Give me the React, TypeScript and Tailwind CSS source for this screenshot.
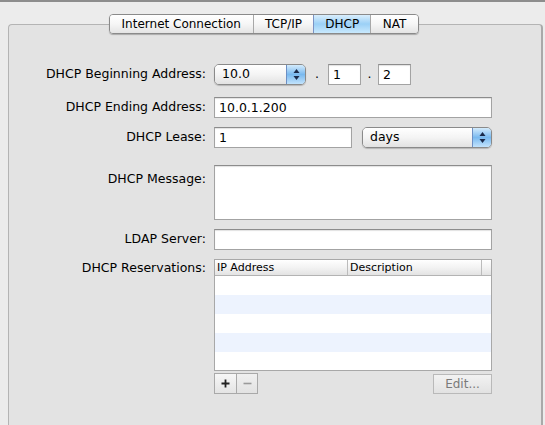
import React from "react";

const font = { fontFamily: '"DejaVu Sans", "Liberation Sans", sans-serif' };

function Arrows() {
  return (
    <svg width="7" height="13" viewBox="0 0 7 13">
      <path d="M3.5 1 L6.5 5 L0.5 5 Z" fill="#1b2a4a" />
      <path d="M3.5 12 L6.5 8 L0.5 8 Z" fill="#1b2a4a" />
    </svg>
  );
}

function Popup({ w, text }: { w: string; text: string }) {
  return (
    <div
      className={`${w} flex h-[21px] shrink-0 overflow-hidden rounded-[5px] border border-[#8a8a8a] shadow-[0_1px_1px_rgba(0,0,0,0.2)]`}
    >
      <div className="flex flex-1 items-center bg-gradient-to-b from-white via-[#f4f4f4] to-[#e2e2e2] pl-[7px] text-[12.5px] text-black">
        {text}
      </div>
      <div className="flex w-[19px] items-center justify-center border-l border-[#6c8fc4] bg-gradient-to-b from-[#d3ebfc] via-[#79b9ef] to-[#c2e3fc]">
        <Arrows />
      </div>
    </div>
  );
}

function Field({ w, text, h = "h-[21px]" }: { w: string; text?: string; h?: string }) {
  return (
    <div
      className={`${w} ${h} flex shrink-0 items-start border border-[#a3a3a3] border-t-[#8c8c8c] bg-white pl-[4px] pt-[2px] text-[12.5px] leading-[15px] text-black shadow-[inset_0_1px_1px_rgba(0,0,0,0.12)]`}
    >
      {text}
    </div>
  );
}

function Label({ children, top = false }: { children: React.ReactNode; top?: boolean }) {
  return (
    <div
      className={`w-[198px] shrink-0 pr-[1px] text-right text-[12.5px] text-black ${top ? "pt-[5px]" : "self-center"}`}
    >
      {children}
    </div>
  );
}

export default function App() {
  const tabs = [
    { t: "Internet Connection", w: "w-[143px]" },
    { t: "TCP/IP", w: "w-[61px]" },
    { t: "DHCP", w: "w-[57px]", sel: true },
    { t: "NAT", w: "w-[48px]" },
  ];
  return (
    <div
      className="h-[425px] w-[545px] overflow-hidden border-t-2 border-[#8d8d8d] bg-[#ececec] pt-[12px]"
      style={font}
    >
      <div className="relative z-10 ml-[109px] flex h-[20px] w-[310px] overflow-hidden rounded-[4px] border border-[#8a8a8a] shadow-[0_1px_1px_rgba(0,0,0,0.25)]">
        {tabs.map((tab, i) => (
          <div
            key={tab.t}
            className={`${tab.w} flex items-center justify-center text-[12px] text-black ${
              i > 0 ? "border-l border-[#a8a8a8]" : ""
            } ${
              tab.sel
                ? "border-l-[#7b93c4] bg-gradient-to-b from-[#d9eefc] via-[#9bd0f6] to-[#c9e9fd]"
                : "bg-gradient-to-b from-white via-[#f6f6f6] to-[#e4e4e4]"
            }`}
          >
            {tab.t}
          </div>
        ))}
      </div>

      <div className="-mt-[10px] ml-[8px] h-[420px] w-[535px] rounded-t-[4px] border border-r-2 border-[#b4b4b4] border-r-[#a9a9a9] bg-[#e3e3e3] pt-[39px]">
        {/* Row 1 */}
        <div className="flex items-center">
          <Label>DHCP Beginning Address:</Label>
          <div className="ml-[7px] flex items-center">
            <Popup w="w-[92px]" text="10.0" />
            <span className="w-[22px] text-center text-[12.5px]">.</span>
            <Field w="w-[33px]" text="1" />
            <span className="w-[17px] text-center text-[12.5px]">.</span>
            <Field w="w-[33px]" text="2" />
          </div>
        </div>
        {/* Row 2 */}
        <div className="mt-[12px] flex">
          <Label>DHCP Ending Address:</Label>
          <div className="ml-[7px]">
            <Field w="w-[278px]" text="10.0.1.200" />
          </div>
        </div>
        {/* Row 3 */}
        <div className="mt-[9px] flex">
          <Label>DHCP Lease:</Label>
          <div className="ml-[7px] flex items-center gap-[10px]">
            <Field w="w-[138px]" text="1" />
            <Popup w="w-[130px]" text="days" />
          </div>
        </div>
        {/* Message */}
        <div className="mt-[17px] flex">
          <Label top>DHCP Message:</Label>
          <div className="ml-[7px]">
            <Field w="w-[278px]" h="h-[55px]" />
          </div>
        </div>
        {/* LDAP */}
        <div className="mt-[9px] flex">
          <Label>LDAP Server:</Label>
          <div className="ml-[7px]">
            <Field w="w-[278px]" />
          </div>
        </div>
        {/* Reservations */}
        <div className="mt-[9px] flex">
          <Label top>
            <span className="relative -top-[5px]">DHCP Reservations:</span>
          </Label>
          <div className="ml-[7px] w-[278px]">
            <div className="h-[112px] overflow-hidden border border-[#a8a8a8] bg-white">
              <div className="flex h-[16px] border-b border-[#b3b3b3] bg-gradient-to-b from-white via-[#f3f3f3] to-[#e3e3e3] text-[11px] leading-[15px] text-black">
                <div className="w-[133px] border-r border-[#bcbcbc] pl-[2px]">IP Address</div>
                <div className="flex-1 border-r border-[#bcbcbc] pl-[2px]">Description</div>
                <div className="w-[9px]" />
              </div>
              {[0, 1, 2, 3, 4].map((r) => (
                <div key={r} className={`h-[19px] ${r % 2 === 1 ? "bg-[#edf3fe]" : "bg-white"}`} />
              ))}
            </div>
            <div className="mt-[2px] flex items-start">
              <div className="flex h-[21px] border border-[#a9a9a9]">
                <div className="flex w-[22px] items-center justify-center border-r border-[#a9a9a9] bg-gradient-to-b from-[#f7f7f7] to-[#e4e4e4]">
                  <svg width="9" height="9" viewBox="0 0 9 9">
                    <path d="M4.5 0.5 V8.5 M0.5 4.5 H8.5" stroke="#222" strokeWidth="1.8" />
                  </svg>
                </div>
                <div className="flex w-[20px] items-center justify-center bg-gradient-to-b from-[#f0f0f0] to-[#e2e2e2]">
                  <svg width="9" height="9" viewBox="0 0 9 9">
                    <path d="M0.5 4.5 H8.5" stroke="#9a9a9a" strokeWidth="1.6" />
                  </svg>
                </div>
              </div>
              <div className="ml-auto mt-[1px] flex h-[20px] w-[59px] items-center justify-center border border-[#b9b9b9] bg-gradient-to-b from-[#f2f2f2] to-[#e2e2e2] text-[12px] text-[#7a7a7a]">
                Edit...
              </div>
            </div>
          </div>
        </div>
      </div>
    </div>
  );
}
